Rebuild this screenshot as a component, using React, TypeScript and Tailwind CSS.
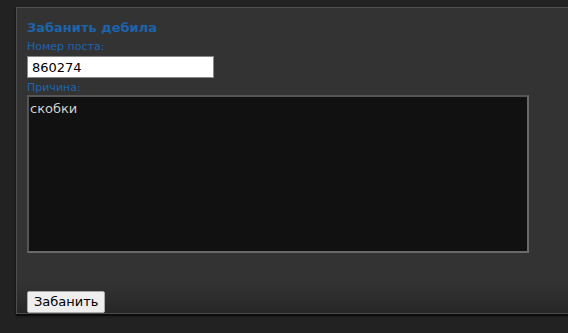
export default function App() {
  return (
    <div
      className="h-[333px] w-[568px] overflow-hidden bg-[#222222] pt-[7px] pl-[16px]"
      style={{ fontFamily: '"DejaVu Sans", Verdana, sans-serif' }}
    >
      <div className="flex w-[600px] flex-col border-t border-b border-l border-[#4e4e4e] bg-[#333333] shadow-[0_2px_2px_rgba(0,0,0,0.8)]">
        <div className="px-[10px] pt-[11px]">
          <h2 className="text-[13px] font-bold leading-[18px] text-[#1c64ad]">Забанить дебила</h2>
          <p className="mt-[3px] text-[11px] leading-[13px] text-[#1c64ad]">Номер поста:</p>
          <input
            defaultValue="860274"
            className="mt-[3px] block h-[22px] w-[187px] border border-[#888] bg-white px-[4px] text-[13px] text-black outline-none"
          />
          <p className="mt-[3px] text-[11px] leading-[13px] text-[#1c64ad]">Причина:</p>
          <textarea
            defaultValue="скобки"
            className="mt-[1px] block h-[158px] w-[502px] resize-none border-2 border-t-[#555] border-l-[#555] border-r-[#6a6a6a] border-b-[#6a6a6a] bg-[#111111] px-[1px] py-[2px] text-[13px] text-[#d0d0d0] outline-none"
          />
        </div>
        <div className="mt-[30px] bg-gradient-to-b from-[#333333] to-[#262626] px-[10px] pt-[6px]">
          <button className="mb-[-1px] h-[22px] rounded-[2px] border border-[#aaa] bg-[#eeeeee] px-[6px] text-[13px] leading-[18px] text-black">
            Забанить
          </button>
        </div>
      </div>
    </div>
  );
}
